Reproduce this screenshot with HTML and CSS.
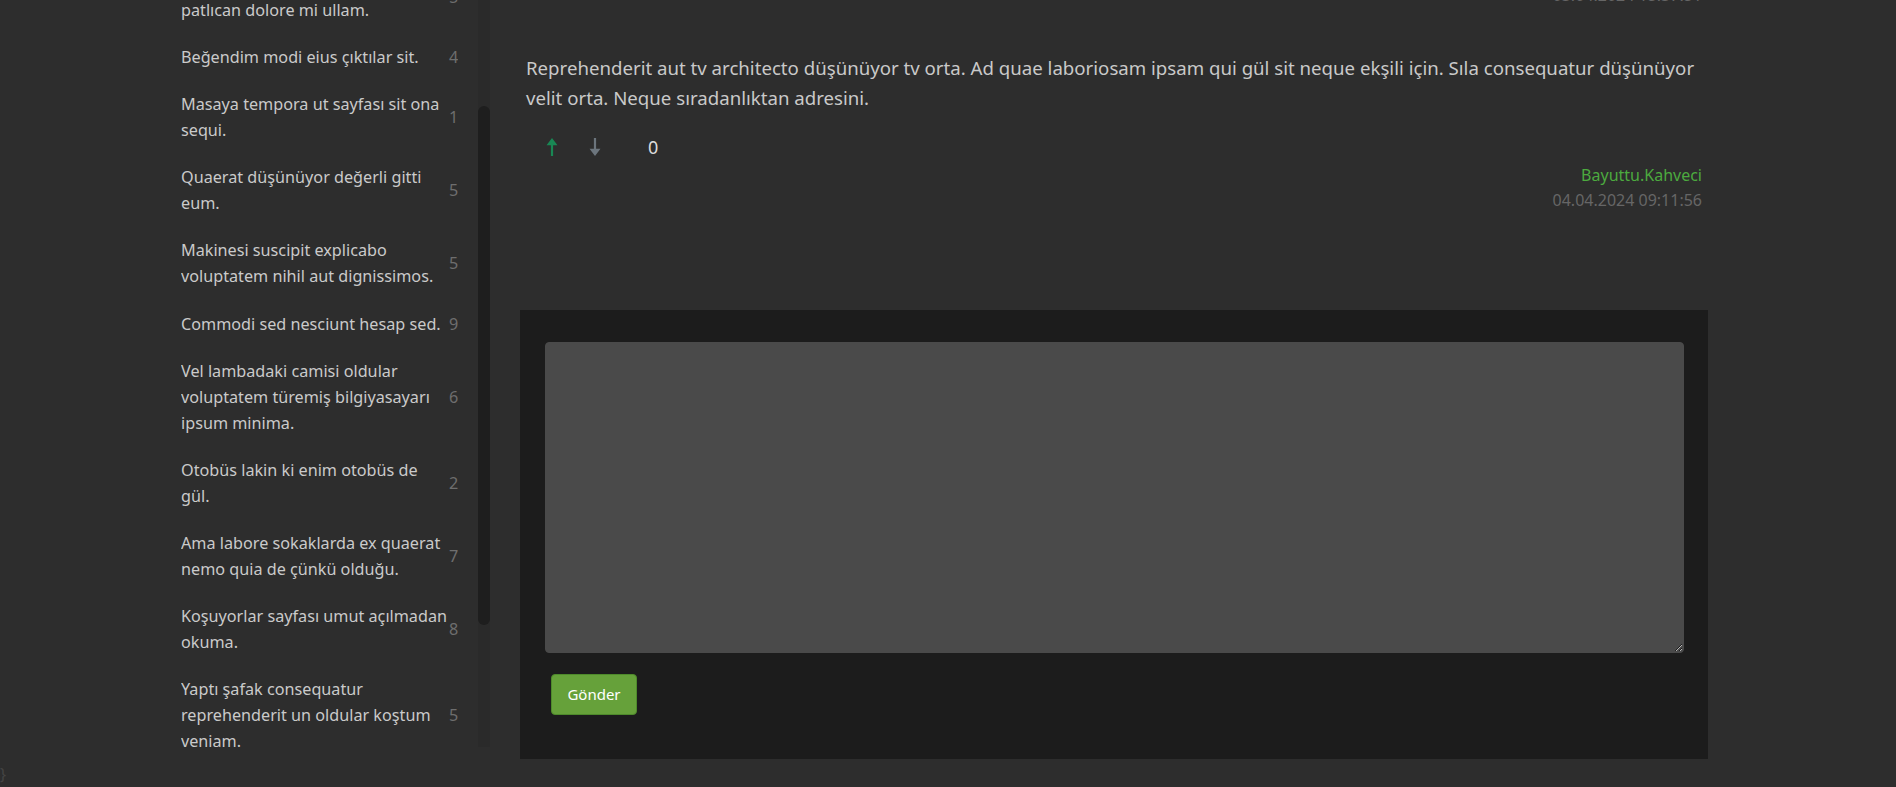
FILE: index.html
```html
<!DOCTYPE html>
<html lang="tr">
<head>
<meta charset="utf-8">
<title>Konu</title>
<link rel="stylesheet" href="styles.css">
</head>
<body>
<div class="page">
  <aside class="sidebar">
    <div class="topics">
      <ul class="topic-list">
        <li class="topic"><span class="topic-title">Aliquam velit sed beğendim patlıcan dolore mi ullam.</span><span class="topic-count">5</span></li>
        <li class="topic"><span class="topic-title">Beğendim modi eius çıktılar sit.</span><span class="topic-count">4</span></li>
        <li class="topic"><span class="topic-title">Masaya tempora ut sayfası sit ona sequi.</span><span class="topic-count">1</span></li>
        <li class="topic"><span class="topic-title">Quaerat düşünüyor değerli gitti eum.</span><span class="topic-count">5</span></li>
        <li class="topic"><span class="topic-title">Makinesi suscipit explicabo voluptatem nihil aut dignissimos.</span><span class="topic-count">5</span></li>
        <li class="topic"><span class="topic-title">Commodi sed nesciunt hesap sed.</span><span class="topic-count">9</span></li>
        <li class="topic"><span class="topic-title">Vel lambadaki camisi oldular voluptatem türemiş bilgiyasayarı ipsum minima.</span><span class="topic-count">6</span></li>
        <li class="topic"><span class="topic-title">Otobüs lakin ki enim otobüs de gül.</span><span class="topic-count">2</span></li>
        <li class="topic"><span class="topic-title">Ama labore sokaklarda ex quaerat nemo quia de çünkü olduğu.</span><span class="topic-count">7</span></li>
        <li class="topic"><span class="topic-title">Koşuyorlar sayfası umut açılmadan okuma.</span><span class="topic-count">8</span></li>
        <li class="topic"><span class="topic-title">Yaptı şafak consequatur reprehenderit un oldular koştum veniam.</span><span class="topic-count">5</span></li>
        <li class="topic"><span class="topic-title">Sit ab düşünüyor voluptatem ut.</span><span class="topic-count">3</span></li>
      </ul>
    </div>
    <div class="scroll-track"><div class="scroll-thumb"></div></div>
  </aside>

  <main class="content">
    <div class="prev-meta">03.04.2024 15:37:51</div>

    <article class="entry">
      <p class="entry-text">Reprehenderit aut tv architecto düşünüyor tv orta. Ad quae laboriosam ipsam qui gül sit neque ekşili için. Sıla consequatur düşünüyor velit orta. Neque sıradanlıktan adresini.</p>
      <div class="vote">
        <span class="vote-btn vote-up">
          <svg width="12" height="18" viewBox="0 0 12 18"><path d="M6 0 L11.5 7.2 L7.1 7.2 L7.1 18 L4.9 18 L4.9 7.2 L0.5 7.2 Z" fill="currentColor"/></svg>
        </span>
        <span class="vote-btn vote-down">
          <svg width="12" height="18" viewBox="0 0 12 18"><path d="M6 18 L11.5 10.8 L7.1 10.8 L7.1 0 L4.9 0 L4.9 10.8 L0.5 10.8 Z" fill="currentColor"/></svg>
        </span>
        <span class="vote-count">0</span>
      </div>
      <div class="entry-meta">
        <div class="entry-author">Bayuttu.Kahveci</div>
        <div class="entry-date">04.04.2024 09:11:56</div>
      </div>
    </article>

    <form class="reply-panel">
      <textarea class="reply-input"></textarea>
      <button type="button" class="reply-btn">Gönder</button>
    </form>
  </main>
</div>
<div class="stray">}</div>
</body>
</html>
```

FILE: styles.css
```css
html, body {
  margin: 0;
  padding: 0;
}

body {
  background: #2d2d2d;
  color: #c9c9c9;
  font-family: "Noto Sans", "Open Sans", sans-serif;
  font-size: 16px;
  overflow: hidden;
}

.page {
  display: flex;
  align-items: flex-start;
  padding-left: 181px;
}

/* ---------- sidebar ---------- */
.sidebar {
  display: flex;
  height: 747px;
}

.topics {
  width: 277px;
  height: 747px;
  overflow: hidden;
}

.topic-list {
  list-style: none;
  margin: -40px 0 0;
  padding: 0;
}

.topic {
  display: flex;
  align-items: center;
  padding: 10.6px 0;
  font-size: 16.2px;
  line-height: 26px;
}

.topic-title {
  flex: 1;
  color: #cacaca;
}

.topic-count {
  width: 9px;
  text-align: right;
  color: #6e6e6e;
}

.scroll-track {
  width: 12px;
  height: 747px;
  margin-left: 20px;
  background: #2a2a2a;
}

.scroll-thumb {
  margin-top: 106px;
  height: 519px;
  border-radius: 6px;
  background: #1e1e1e;
}

/* ---------- main ---------- */
.content {
  width: 1188px;
  margin-left: 30px;
}

.prev-meta {
  margin-top: -16.7px;
  padding-right: 6px;
  text-align: right;
  color: #666;
  line-height: 25px;
}

.entry {
  padding: 0 6px;
}

.entry-text {
  margin: 44.7px 0 0;
  font-size: 18.65px;
  line-height: 29.6px;
  color: #c9c9c9;
}

.vote {
  display: flex;
  align-items: center;
  height: 32px;
  margin-top: 18.8px;
  padding-left: 20px;
}

.vote-btn {
  display: flex;
  width: 12px;
  height: 18px;
}

.vote-up {
  color: #198754;
}

.vote-down {
  color: #6c757d;
  margin-left: 31px;
}

.vote-count {
  margin-left: 47px;
  font-size: 18px;
  color: #dcdcdc;
}

.entry-meta {
  text-align: right;
  line-height: 25px;
}

.entry-author {
  color: #4caa3f;
}

.entry-date {
  color: #666;
}

/* ---------- reply ---------- */
.reply-panel {
  margin: 97px 0 0;
  padding: 32px 24px 44px 25px;
  background: #1c1c1c;
}

.reply-input {
  display: block;
  box-sizing: border-box;
  width: 100%;
  height: 311px;
  margin: 0;
  padding: 8px 12px;
  border: 1px solid #4a4a4a;
  border-radius: 4px;
  background: #4a4a4a;
  color: #ddd;
  font-family: "Noto Sans", sans-serif;
  font-size: 16px;
  outline: none;
}

.reply-btn {
  display: block;
  box-sizing: border-box;
  width: 86px;
  height: 41px;
  margin: 21px 0 0 6px;
  padding: 0;
  border: 1px solid #4e8a2b;
  border-radius: 4px;
  background: #66a13a;
  color: #fff;
  font-family: "Noto Sans", sans-serif;
  font-size: 15px;
}

.stray {
  padding-top: 3px;
  line-height: 25px;
  color: #444;
}
```
